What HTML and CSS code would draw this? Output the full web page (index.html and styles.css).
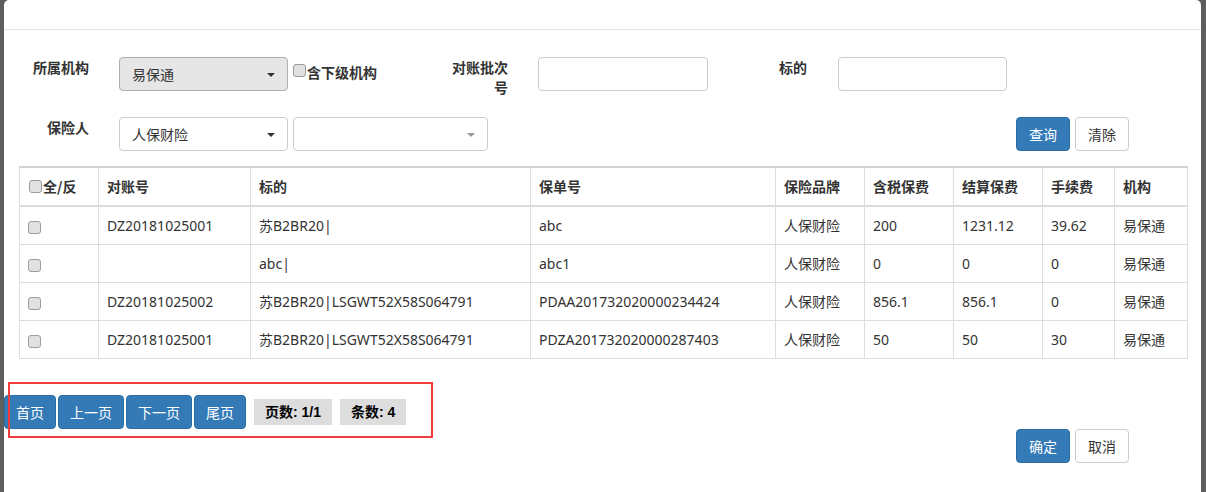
FILE: index.html
```html
<!DOCTYPE html>
<html lang="zh-CN">
<head>
  <meta charset="UTF-8">
  <title>对账查询</title>
  <link rel="stylesheet" href="styles.css">
</head>
<body>
<div class="modal">
  <div class="modal-header"></div>
  <div class="modal-body">
    <div class="form-row">
      <label class="form-label">所属机构</label>
      <div class="select select-active">
        <span>易保通</span>
        <i class="caret"></i>
      </div>
      <label class="check-group"><input type="checkbox" class="check">含下级机构</label>
      <label class="form-label form-label-narrow">对账批次号</label>
      <input type="text" class="input">
      <label class="form-label form-label-short">标的</label>
      <input type="text" class="input input-last">
    </div>
    <div class="form-row form-row-second">
      <label class="form-label">保险人</label>
      <div class="select">
        <span>人保财险</span>
        <i class="caret"></i>
      </div>
      <div class="select select-wide">
        <span></span>
        <i class="caret caret-light"></i>
      </div>
      <div class="actions">
        <button class="btn btn-primary">查询</button>
        <button class="btn btn-default">清除</button>
      </div>
    </div>

    <table class="grid">
      <thead>
        <tr>
          <th><input type="checkbox" class="check check-head">全/反</th>
          <th>对账号</th>
          <th>标的</th>
          <th>保单号</th>
          <th>保险品牌</th>
          <th>含税保费</th>
          <th>结算保费</th>
          <th>手续费</th>
          <th>机构</th>
        </tr>
      </thead>
      <tbody>
        <tr>
          <td><input type="checkbox" class="check"></td>
          <td>DZ20181025001</td>
          <td>苏B2BR20|</td>
          <td>abc</td>
          <td>人保财险</td>
          <td>200</td>
          <td>1231.12</td>
          <td>39.62</td>
          <td>易保通</td>
        </tr>
        <tr>
          <td><input type="checkbox" class="check"></td>
          <td></td>
          <td>abc|</td>
          <td>abc1</td>
          <td>人保财险</td>
          <td>0</td>
          <td>0</td>
          <td>0</td>
          <td>易保通</td>
        </tr>
        <tr>
          <td><input type="checkbox" class="check"></td>
          <td>DZ20181025002</td>
          <td>苏B2BR20|LSGWT52X58S064791</td>
          <td>PDAA201732020000234424</td>
          <td>人保财险</td>
          <td>856.1</td>
          <td>856.1</td>
          <td>0</td>
          <td>易保通</td>
        </tr>
        <tr>
          <td><input type="checkbox" class="check"></td>
          <td>DZ20181025001</td>
          <td>苏B2BR20|LSGWT52X58S064791</td>
          <td>PDZA201732020000287403</td>
          <td>人保财险</td>
          <td>50</td>
          <td>50</td>
          <td>30</td>
          <td>易保通</td>
        </tr>
      </tbody>
    </table>

    <div class="pager">
      <button class="pg-btn">首页</button>
      <button class="pg-btn">上一页</button>
      <button class="pg-btn">下一页</button>
      <button class="pg-btn">尾页</button>
      <span class="pg-info">页数: 1/1</span>
      <span class="pg-info">条数: 4</span>
    </div>
  </div>
  <div class="modal-footer">
    <button class="btn btn-primary">确定</button>
    <button class="btn btn-default">取消</button>
  </div>
  <div class="highlight"></div>
</div>
</body>
</html>
```

FILE: styles.css
```css
body {
  margin: 0;
  padding: 0;
  background-color: #5e5e5e;
  font-family: 'Noto Sans', 'Noto Sans CJK SC', sans-serif;
  font-size: 14px;
  color: #333;
}

.modal {
  position: relative;
  margin-left: 4px;
  width: 1197px;
  height: 492px;
  background-color: #fff;
  border-radius: 5px 5px 0 0;
  overflow: hidden;
}

.modal-header {
  height: 29px;
  border-bottom: 1px solid #e5e5e5;
}

.modal-body {
  padding: 27px 15px 0;
}

.form-row {
  display: flex;
  align-items: flex-start;
  height: 34px;
}

.form-row-second {
  margin-top: 26px;
}

.form-label {
  width: 70px;
  flex: none;
  text-align: right;
  font-weight: bold;
  line-height: 20px;
  margin-right: 30px;
  font-family: 'Noto Sans CJK SC', sans-serif;
}

.form-label-narrow {
  width: 60px;
}

.form-label-short {
  margin-left: 29px;
  margin-right: 31px;
}

.select {
  position: relative;
  box-sizing: border-box;
  width: 169px;
  height: 34px;
  flex: none;
  padding: 0 12px;
  border: 1px solid #ccc;
  border-radius: 4px;
  background-color: #fff;
  line-height: 32px;
  font-family: 'Noto Sans CJK SC', sans-serif;
}

.select-active {
  background-color: #e6e6e6;
  border-color: #adadad;
}

.select-wide {
  width: 195px;
  margin-left: 5px;
}

.caret {
  position: absolute;
  right: 12px;
  top: 15px;
  width: 0;
  height: 0;
  border-top: 4px solid #333;
  border-left: 4px solid transparent;
  border-right: 4px solid transparent;
}

.caret-light {
  border-top-color: #999;
}

.check-group {
  box-sizing: border-box;
  width: 155px;
  flex: none;
  margin-left: 5px;
  padding-top: 5px;
  line-height: 20px;
  font-weight: bold;
  font-family: 'Noto Sans CJK SC', sans-serif;
  display: flex;
  align-items: center;
}

.check {
  appearance: none;
  -webkit-appearance: none;
  box-sizing: border-box;
  width: 13px;
  height: 13px;
  margin: 0;
  border: 1px solid #9d9d9d;
  border-radius: 3px;
  background-color: #e1e1e1;
  vertical-align: middle;
}

.check-group .check {
  margin: -3px 1px 0 0;
}

.check-head {
  margin: -4px 1px 0 1px;
}

.input {
  box-sizing: border-box;
  width: 170px;
  height: 34px;
  flex: none;
  margin: 0;
  border: 1px solid #ccc;
  border-radius: 4px;
}

.input-last {
  width: 169px;
}

.actions {
  display: flex;
  margin-left: auto;
  margin-right: 57px;
}

.btn {
  box-sizing: border-box;
  height: 34px;
  padding: 0 12px;
  border: 1px solid #ccc;
  border-radius: 4px;
  font-family: 'Noto Sans CJK SC', sans-serif;
  font-size: 14px;
  cursor: pointer;
}

.btn + .btn {
  margin-left: 5px;
}

.btn-primary {
  background-color: #337ab7;
  border-color: #2e6da4;
  color: #fff;
}

.btn-default {
  background-color: #fff;
  color: #333;
}

.grid {
  width: 1168px;
  margin-top: 15px;
  border-collapse: collapse;
  table-layout: fixed;
  border: 1px solid #ddd;
  border-top: 2px solid #d2d2d2;
}

.grid th,
.grid td {
  box-sizing: border-box;
  padding: 8px;
  line-height: 21px;
  border: 1px solid #ddd;
  text-align: left;
  vertical-align: middle;
  white-space: nowrap;
  overflow: hidden;
}

.grid th {
  font-family: 'Noto Sans CJK SC', sans-serif;
  font-weight: bold;
  border-top: none;
  border-bottom: 2px solid #ddd;
}

.grid th:nth-child(1) { width: 79px; }
.grid th:nth-child(2) { width: 152px; }
.grid th:nth-child(3) { width: 280px; }
.grid th:nth-child(4) { width: 245px; }
.grid th:nth-child(5) { width: 89px; }
.grid th:nth-child(6) { width: 89px; }
.grid th:nth-child(7) { width: 89px; }
.grid th:nth-child(8) { width: 72px; }
.grid th:nth-child(9) { width: 73px; }

.pager {
  display: flex;
  align-items: center;
  height: 34px;
  margin: 36px 0 0 -15px;
}

.pg-btn {
  box-sizing: border-box;
  height: 34px;
  padding: 0 11px;
  margin-right: 2px;
  border: 1px solid #2e6da4;
  border-radius: 4px;
  background-color: #337ab7;
  color: #fff;
  font-family: 'Noto Sans CJK SC', sans-serif;
  font-size: 14px;
}

.pg-info {
  height: 26px;
  line-height: 26px;
  margin-left: 6px;
  padding: 0 11px;
  background-color: #ddd;
  color: #000;
  font-weight: bold;
  font-family: 'Liberation Sans', 'Noto Sans CJK SC', sans-serif;
}

.pg-info + .pg-info {
  margin-left: 8px;
}

.modal-footer {
  display: flex;
  justify-content: flex-end;
  padding-right: 72px;
}

.highlight {
  position: absolute;
  left: 4px;
  top: 382px;
  width: 421px;
  height: 52px;
  border: 2px solid #f23c3c;
}
```
